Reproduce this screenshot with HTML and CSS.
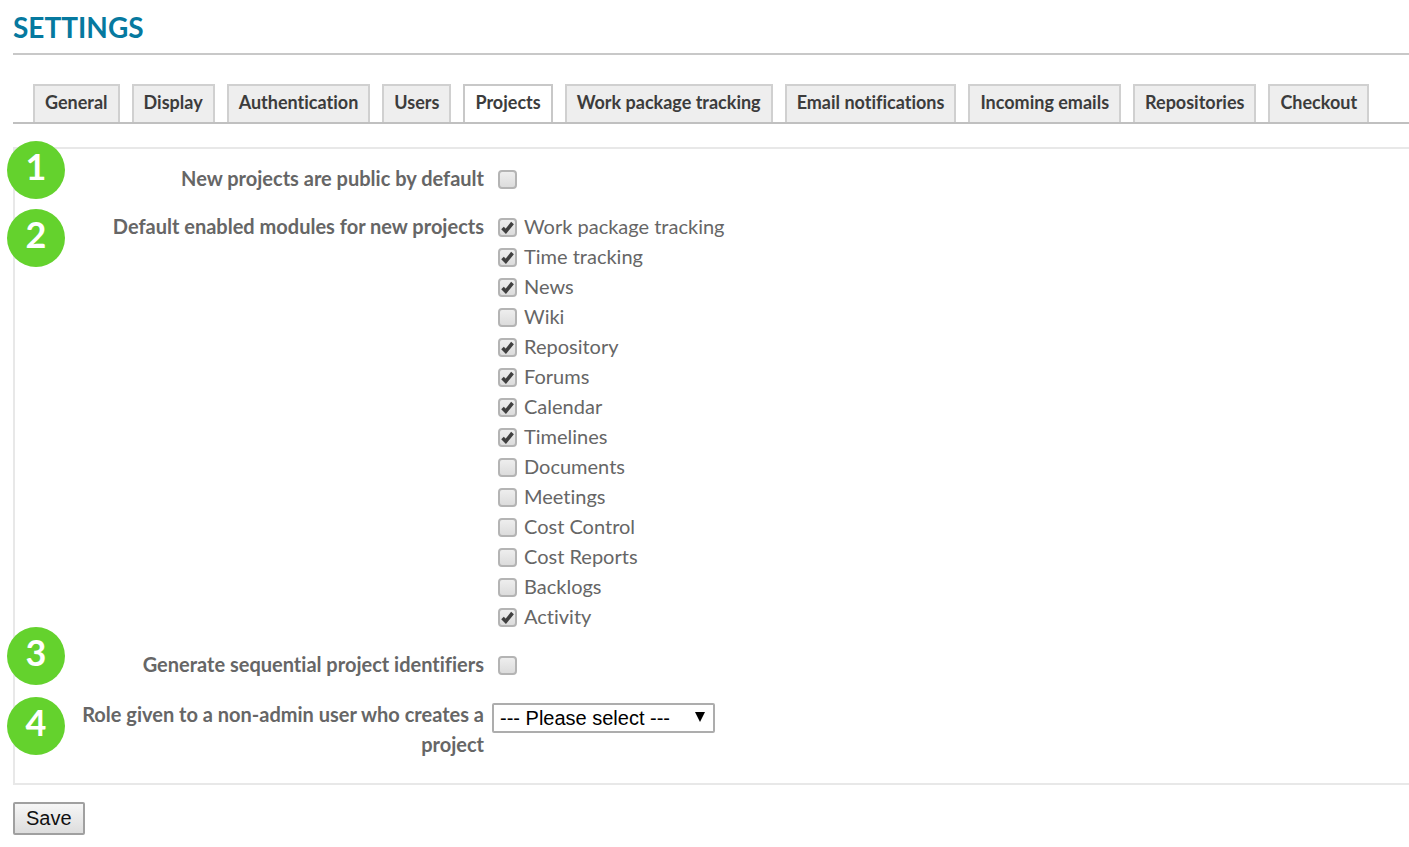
FILE: index.html
```html
<!DOCTYPE html>
<html lang="en">
<head>
<meta charset="utf-8">
<title>Settings</title>
<link rel="stylesheet" href="styles.css">
</head>
<body>
<main class="page">
  <h1 class="title">SETTINGS</h1>
  <nav class="tabs" aria-label="Settings sections">
    <a class="tab" href="#general">General</a>
    <a class="tab" href="#display">Display</a>
    <a class="tab" href="#authentication">Authentication</a>
    <a class="tab" href="#users">Users</a>
    <a class="tab tab-active" href="#projects" aria-current="page">Projects</a>
    <a class="tab" href="#tracking">Work package tracking</a>
    <a class="tab" href="#email">Email notifications</a>
    <a class="tab" href="#incoming">Incoming emails</a>
    <a class="tab" href="#repositories">Repositories</a>
    <a class="tab" href="#checkout">Checkout</a>
  </nav>
  <form class="form">
    <div class="panel">
      <div class="row">
        <span class="badge">1</span>
        <label class="label" for="public">New projects are public by default</label>
        <div class="field"><span class="option"><input class="check" type="checkbox" id="public"></span></div>
      </div>
      <div class="row row-modules" role="group" aria-labelledby="modules">
        <span class="badge">2</span>
        <span class="label" id="modules">Default enabled modules for new projects</span>
        <div class="field">
          <label class="option"><input class="check" type="checkbox" checked>Work package tracking</label>
          <label class="option"><input class="check" type="checkbox" checked>Time tracking</label>
          <label class="option"><input class="check" type="checkbox" checked>News</label>
          <label class="option"><input class="check" type="checkbox">Wiki</label>
          <label class="option"><input class="check" type="checkbox" checked>Repository</label>
          <label class="option"><input class="check" type="checkbox" checked>Forums</label>
          <label class="option"><input class="check" type="checkbox" checked>Calendar</label>
          <label class="option"><input class="check" type="checkbox" checked>Timelines</label>
          <label class="option"><input class="check" type="checkbox">Documents</label>
          <label class="option"><input class="check" type="checkbox">Meetings</label>
          <label class="option"><input class="check" type="checkbox">Cost Control</label>
          <label class="option"><input class="check" type="checkbox">Cost Reports</label>
          <label class="option"><input class="check" type="checkbox">Backlogs</label>
          <label class="option"><input class="check" type="checkbox" checked>Activity</label>
        </div>
      </div>
      <div class="row">
        <span class="badge">3</span>
        <label class="label" for="sequential">Generate sequential project identifiers</label>
        <div class="field"><span class="option"><input class="check" type="checkbox" id="sequential"></span></div>
      </div>
      <div class="row">
        <span class="badge">4</span>
        <label class="label" for="role">Role given to a non-admin user who creates a project</label>
        <div class="field">
          <div class="select-box">
            <select class="select" id="role"><option>--- Please select ---</option></select>
            <svg class="arrow" viewBox="0 0 10 10" aria-hidden="true"><path d="M0 0h10L5 10z"/></svg>
          </div>
        </div>
      </div>
    </div>
    <button class="save" type="submit">Save</button>
  </form>
</main>
</body>
</html>
```
FILE: styles.css
```css
* { box-sizing: border-box; }
body {
  margin: 0;
  background: #fff;
  color: #666;
  font: 20px/30px Lato, sans-serif;
  font-variant-ligatures: none;
  overflow-x: hidden;
}
.page { padding: 8px 0 12px 13px; }
.title {
  margin: 0;
  padding-bottom: 7px;
  border-bottom: 2px solid #c8c8c8;
  color: #06799f;
  font-size: 28px;
  font-weight: 700;
  line-height: 38px;
}
.tabs {
  display: flex;
  gap: 12px;
  margin-top: 29px;
  padding-left: 20px;
  border-bottom: 2px solid #c0c0c0;
}
.tab {
  padding: 1px 10px 5px;
  border: 2px solid #d0d0d0;
  border-bottom: 0;
  background: #eee;
  color: #3c3c3c;
  font-size: 18px;
  font-weight: 700;
  text-decoration: none;
  white-space: nowrap;
}
.tab-active { border-color: #c8c8c8; background: #fff; }
.panel {
  display: flex;
  flex-direction: column;
  gap: 20px;
  margin-top: 23px;
  padding: 14px 0 24px;
  border: 2px solid #e8e8e8;
  border-right: 0;
}
.row {
  position: relative;
  display: grid;
  grid-template-columns: 469px 1fr;
  gap: 8px;
}
.row-modules { margin: -2px 0; }
.label { padding-left: 50px; color: #666; font-weight: 700; text-align: right; }
.option { display: flex; align-items: center; gap: 7px; width: fit-content; min-height: 30px; padding-left: 6px; }
.check {
  appearance: none;
  width: 19px;
  height: 19px;
  margin: 2px 0 0;
  border: 2px solid #b4b4b4;
  border-radius: 4px;
  background: linear-gradient(#eee, #dcdcdc);
}
.check:checked {
  background: url("data:image/svg+xml,%3Csvg xmlns='http://www.w3.org/2000/svg' viewBox='0 0 15 15'%3E%3Cpath d='M2.5 8 5.8 11.3 12.5 3' fill='none' stroke='%23404040' stroke-width='3.6'/%3E%3C/svg%3E") center / 15px, linear-gradient(#eee, #dcdcdc);
}
.badge {
  position: absolute;
  top: -22px;
  left: -8px;
  width: 58px;
  height: 58px;
  border-radius: 50%;
  background: #64d22d;
  color: #fff;
  font-size: 36px;
  font-weight: 700;
  line-height: 50px;
  text-align: center;
}
.row:nth-child(even) .badge { top: -2px; }
.select-box { position: relative; width: 223px; margin-top: 4px; }
.select {
  display: block;
  appearance: none;
  width: 100%;
  height: 30px;
  padding: 0 6px;
  border: 2px solid #adadad;
  border-radius: 2px;
  background: #fff;
  color: #000;
  font: 20px "Liberation Sans", Arial, sans-serif;
}
.arrow { position: absolute; top: 9px; right: 10px; width: 10px; height: 10px; pointer-events: none; }
.save {
  display: block;
  margin-top: 17px;
  padding: 0 11px;
  border: 2px solid #a0a0a0;
  border-radius: 2px;
  background: linear-gradient(#f6f6f6, #ddd);
  color: #111;
  font: 20px/29px "Liberation Sans", Arial, sans-serif;
}
```
